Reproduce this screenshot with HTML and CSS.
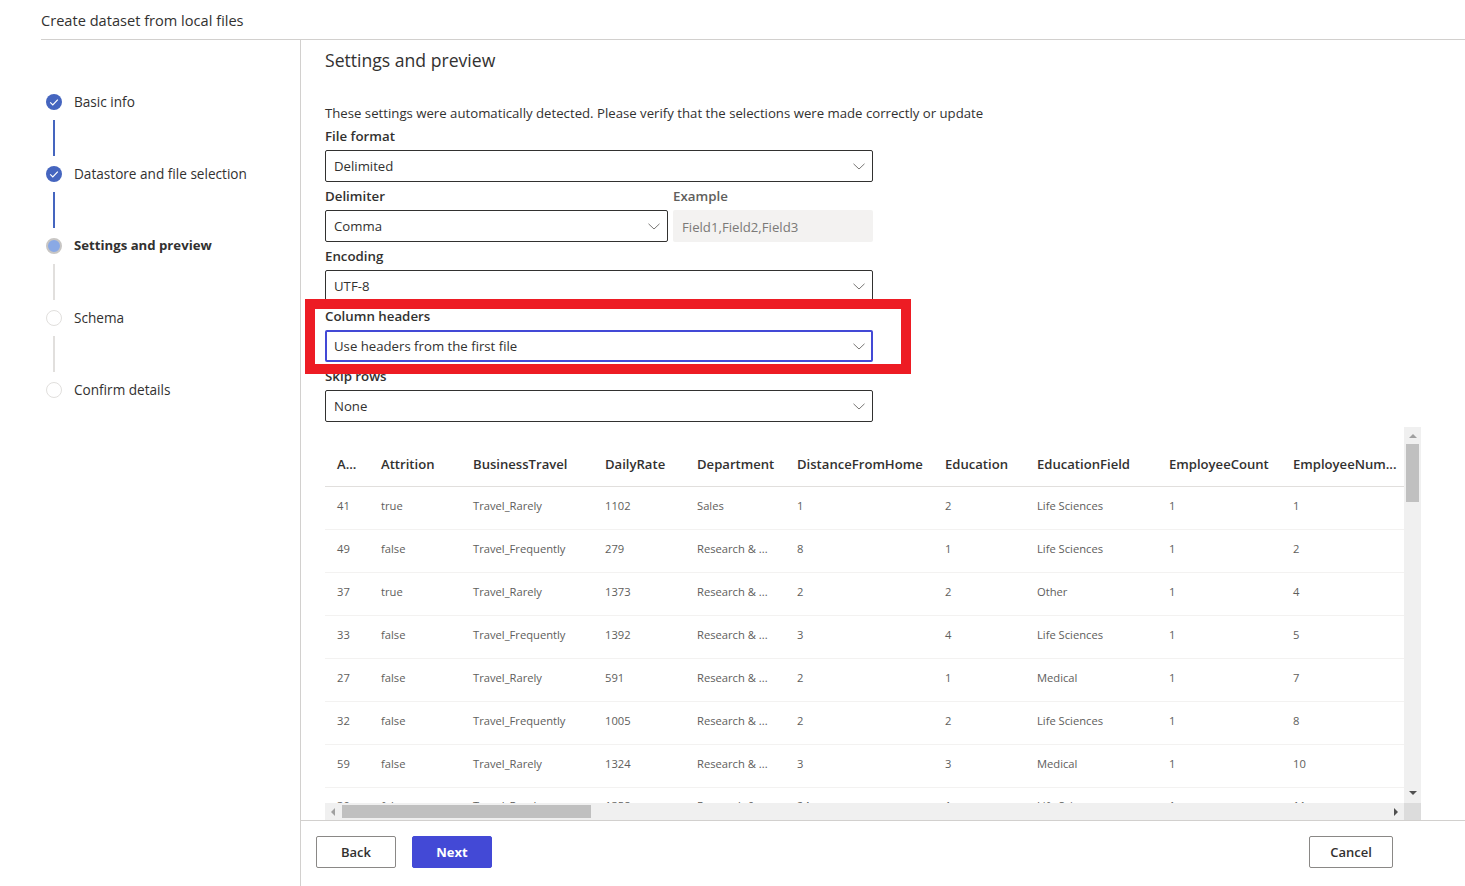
FILE: index.html
```html
<!DOCTYPE html>
<html>
<head>
  <title>Create dataset from local files</title>
  <meta charset="UTF-8">
  <link rel="stylesheet" href="styles.css">
</head>
<body>
  <div class="header"><div class="header-title">Create dataset from local files</div></div>
  <div class="content">
    <div class="sidebar">
      <div class="step">
        <span class="dot done"><svg width="16" height="16" viewBox="0 0 16 16"><path d="M4.200 8.400l2.600 2.500 5-5.300" fill="none" stroke="#fff" stroke-width="1.200"/></svg></span>
        <span>Basic info</span>
      </div>
      <div class="line done"></div>
      <div class="step">
        <span class="dot done"><svg width="16" height="16" viewBox="0 0 16 16"><path d="M4.200 8.400l2.600 2.500 5-5.300" fill="none" stroke="#fff" stroke-width="1.200"/></svg></span>
        <span>Datastore and file selection</span>
      </div>
      <div class="line done"></div>
      <div class="step current">
        <span class="dot active"></span>
        <span>Settings and preview</span>
      </div>
      <div class="line"></div>
      <div class="step">
        <span class="dot"></span>
        <span>Schema</span>
      </div>
      <div class="line"></div>
      <div class="step">
        <span class="dot"></span>
        <span>Confirm details</span>
      </div>
    </div>

    <div class="main">
      <div class="panel">
        <h1>Settings and preview</h1>
        <p class="intro">These settings were automatically detected. Please verify that the selections were made correctly or update</p>

        <div class="field">
          <label>File format</label>
          <div class="select"><span>Delimited</span><svg class="chevron" width="12" height="7" viewBox="0 0 12 7"><path d="M.5.800L6 6l5.500-5.200" fill="none" stroke="#797775"/></svg></div>
        </div>
        <div class="field-row">
          <div class="field delimiter">
            <label>Delimiter</label>
            <div class="select"><span>Comma</span><svg class="chevron" width="12" height="7" viewBox="0 0 12 7"><path d="M.5.800L6 6l5.500-5.200" fill="none" stroke="#797775"/></svg></div>
          </div>
          <div class="field example">
            <label>Example</label>
            <div class="readonly">Field1,Field2,Field3</div>
          </div>
        </div>
        <div class="field">
          <label>Encoding</label>
          <div class="select"><span>UTF-8</span><svg class="chevron" width="12" height="7" viewBox="0 0 12 7"><path d="M.5.800L6 6l5.500-5.200" fill="none" stroke="#797775"/></svg></div>
        </div>
        <div class="field">
          <label>Column headers</label>
          <div class="select focused"><span>Use headers from the first file</span><svg class="chevron" width="12" height="7" viewBox="0 0 12 7"><path d="M.5.800L6 6l5.500-5.200" fill="none" stroke="#797775"/></svg></div>
        </div>
        <div class="field">
          <label>Skip rows</label>
          <div class="select"><span>None</span><svg class="chevron" width="12" height="7" viewBox="0 0 12 7"><path d="M.5.800L6 6l5.500-5.200" fill="none" stroke="#797775"/></svg></div>
        </div>

        <div class="preview">
          <div class="table-view">
            <table>
              <thead>
                <tr>
                  <th class="c-age">A...</th><th class="c-attr">Attrition</th><th class="c-travel">BusinessTravel</th><th class="c-rate">DailyRate</th><th class="c-dept">Department</th><th class="c-dist">DistanceFromHome</th><th class="c-edu">Education</th><th class="c-field">EducationField</th><th class="c-count">EmployeeCount</th><th class="c-num">EmployeeNum...</th>
                </tr>
              </thead>
              <tbody>
                <tr><td>41</td><td>true</td><td>Travel_Rarely</td><td>1102</td><td>Sales</td><td>1</td><td>2</td><td>Life Sciences</td><td>1</td><td>1</td></tr>
                <tr><td>49</td><td>false</td><td>Travel_Frequently</td><td>279</td><td>Research &amp; ...</td><td>8</td><td>1</td><td>Life Sciences</td><td>1</td><td>2</td></tr>
                <tr><td>37</td><td>true</td><td>Travel_Rarely</td><td>1373</td><td>Research &amp; ...</td><td>2</td><td>2</td><td>Other</td><td>1</td><td>4</td></tr>
                <tr><td>33</td><td>false</td><td>Travel_Frequently</td><td>1392</td><td>Research &amp; ...</td><td>3</td><td>4</td><td>Life Sciences</td><td>1</td><td>5</td></tr>
                <tr><td>27</td><td>false</td><td>Travel_Rarely</td><td>591</td><td>Research &amp; ...</td><td>2</td><td>1</td><td>Medical</td><td>1</td><td>7</td></tr>
                <tr><td>32</td><td>false</td><td>Travel_Frequently</td><td>1005</td><td>Research &amp; ...</td><td>2</td><td>2</td><td>Life Sciences</td><td>1</td><td>8</td></tr>
                <tr><td>59</td><td>false</td><td>Travel_Rarely</td><td>1324</td><td>Research &amp; ...</td><td>3</td><td>3</td><td>Medical</td><td>1</td><td>10</td></tr>
                <tr><td>30</td><td>false</td><td>Travel_Rarely</td><td>1358</td><td>Research &amp; ...</td><td>24</td><td>1</td><td>Life Sciences</td><td>1</td><td>11</td></tr>
              </tbody>
            </table>
          </div>
          <div class="vbar">
            <span class="arrow up"></span>
            <span class="vthumb"></span>
            <span class="arrow down"></span>
          </div>
          <div class="hbar">
            <span class="arrow left"></span>
            <span class="hthumb"></span>
            <span class="arrow right"></span>
          </div>
          <div class="corner"></div>
        </div>
      </div>

      <div class="footer">
        <button class="btn">Back</button>
        <button class="btn primary">Next</button>
        <button class="btn cancel">Cancel</button>
      </div>
    </div>
  </div>

  <div class="highlight"></div>
</body>
</html>
```

FILE: styles.css
```css
* {
  box-sizing: border-box;
}
body {
  margin: 0;
  height: 886px;
  overflow: hidden;
  background-color: #fff;
  color: #323130;
  font-family: "Open Sans", "Noto Sans", sans-serif;
  font-size: 13.2px;
}
.header {
  height: 40px;
  padding-left: 41px;
}
.header-title {
  height: 40px;
  line-height: 41px;
  font-size: 14.6px;
  border-bottom: 1px solid #d2d0ce;
}
.content {
  display: flex;
  height: 846px;
}
.sidebar {
  width: 301px;
  flex-shrink: 0;
  padding: 54px 0 0 46px;
  border-right: 1px solid #d2d0ce;
  font-size: 13.6px;
}
.step {
  display: flex;
  align-items: flex-start;
  gap: 12px;
  height: 16px;
  line-height: 15px;
}
.step.current {
  font-weight: 700;
  font-size: 13.2px;
}
.dot {
  width: 16px;
  height: 16px;
  flex-shrink: 0;
  border-radius: 50%;
  border: 1.5px solid #e1dfdd;
}
.dot svg {
  display: block;
}
.dot.done {
  border: none;
  background-color: #4565bf;
}
.dot.active {
  border: 2px solid #c8c6c4;
  background-color: #8aa9e5;
}
.line {
  width: 2px;
  height: 36px;
  margin: 10px 0 10px 7px;
  background-color: #e1dfdd;
}
.line.done {
  background-color: #4565bf;
}
.main {
  flex: 1;
  display: flex;
  flex-direction: column;
  min-width: 0;
}
.panel {
  height: 780px;
  padding-left: 24px;
}
h1 {
  margin: 0;
  height: 42px;
  line-height: 41px;
  font-size: 17.6px;
  font-weight: 500;
  color: #323130;
}
.intro {
  margin: 0;
  padding-top: 22px;
  height: 40px;
  line-height: 18px;
  color: #323130;
}
.field {
  width: 548px;
}
.field label {
  display: block;
  height: 28px;
  line-height: 28px;
  font-size: 13.3px;
  font-weight: 550;
}
.field-row {
  display: flex;
  width: 548px;
  gap: 5px;
}
.delimiter {
  width: 343px;
}
.example {
  width: 200px;
}
.example label {
  color: #605e5c;
}
.select {
  display: flex;
  justify-content: space-between;
  align-items: center;
  height: 32px;
  padding: 0 7px 0 8px;
  border: 1px solid #323130;
  border-radius: 2px;
}
.select.focused {
  border: 2px solid #4349d6;
  padding: 0 6px 0 7px;
}
.chevron {
  flex-shrink: 0;
}
.readonly {
  height: 32px;
  line-height: 34px;
  padding: 0 9px;
  background-color: #f3f2f1;
  border-radius: 2px;
  color: #7b7977;
}
.preview {
  display: grid;
  grid-template-columns: 1079px 17px;
  grid-template-rows: 376px 17px;
  margin-top: 5px;
}
.table-view {
  overflow: hidden;
}
table {
  table-layout: fixed;
  width: 1136px;
  border-collapse: collapse;
}
th, td {
  padding: 0 0 0 12px;
  text-align: left;
  white-space: nowrap;
  overflow: hidden;
}
th {
  height: 59px;
  padding-top: 15px;
  font-size: 13.1px;
  font-weight: 550;
  color: #323130;
  border-bottom: 1px solid #e1dfdd;
}
td {
  height: 43px;
  padding-bottom: 4px;
  font-size: 11.2px;
  color: #605e5c;
  border-bottom: 1px solid #f3f2f1;
}
tbody tr:last-child td {
  padding-bottom: 7px;
}
.c-age { width: 44px; }
.c-attr { width: 92px; }
.c-travel { width: 132px; }
.c-rate { width: 92px; }
.c-dept { width: 100px; }
.c-dist { width: 148px; }
.c-edu { width: 92px; }
.c-field { width: 132px; }
.c-count { width: 124px; }
.c-num { width: 180px; }
.vbar {
  display: flex;
  flex-direction: column;
  align-items: center;
  background-color: #f0f0f0;
}
.vthumb {
  width: 13px;
  height: 58px;
  background-color: #c0c0c0;
}
.hbar {
  display: flex;
  align-items: center;
  background-color: #f0f0f0;
}
.hthumb {
  width: 249px;
  height: 13px;
  background-color: #c0c0c0;
}
.corner {
  background-color: #dcdcdc;
}
.arrow {
  display: block;
  width: 0;
  height: 0;
  flex-shrink: 0;
  border-style: solid;
  border-color: transparent;
}
.arrow.up {
  margin: 7px 0 6px;
  border-width: 0 4px 4px;
  border-bottom-color: #a0a0a0;
}
.arrow.down {
  margin: auto 0 8px;
  border-width: 4px 4px 0;
  border-top-color: #505050;
}
.arrow.left {
  margin: 0 7px 0 6px;
  border-width: 4px 4px 4px 0;
  border-right-color: #a0a0a0;
}
.arrow.right {
  margin: 0 6px 0 auto;
  border-width: 4px 0 4px 4px;
  border-left-color: #505050;
}
.footer {
  display: flex;
  gap: 16px;
  height: 66px;
  padding: 15px 72px 0 15px;
  border-top: 1px solid #d2d0ce;
}
.btn {
  width: 80px;
  height: 32px;
  padding: 0;
  font-family: inherit;
  font-size: 13px;
  font-weight: 600;
  color: #323130;
  background-color: #fff;
  border: 1px solid #8a8886;
  border-radius: 2px;
}
.btn.primary {
  color: #fff;
  background-color: #4349d6;
  border-color: #4349d6;
  font-weight: 700;
}
.btn.cancel {
  width: 84px;
  margin-left: auto;
}
.highlight {
  position: absolute;
  left: 305px;
  top: 299px;
  width: 606px;
  height: 75px;
  border: 10px solid #ed1c24;
}
```
